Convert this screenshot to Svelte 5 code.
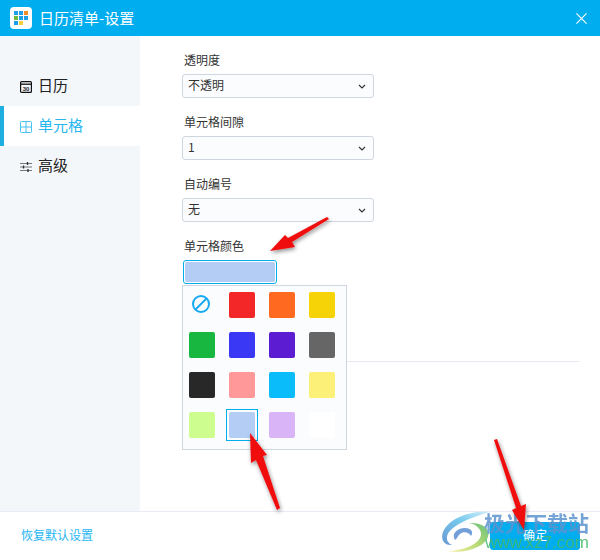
<script>
  const fields = [
    { label: "透明度", value: "不透明" },
    { label: "单元格间隙", value: "1" },
    { label: "自动编号", value: "无" }
  ];

  const colors = [
    "none", "#f32727", "#ff6a20", "#f6d306",
    "#18b73f", "#3a38f5", "#5c1cd2", "#666666",
    "#282828", "#ff9999", "#0bbcfb", "#fcf078",
    "#cdfd8e", "#b3cdf4", "#d9b5f8", "#ffffff"
  ];
  const selected = "#b3cdf4";

  const tiles = [
    "#1f9fe8", "#1f9fe8", "#f28c28",
    "#6cbb3c", "#1f9fe8", "#1f9fe8",
    "#1f9fe8", "#f7cf3c", "transparent"
  ];
</script>

<div class="window">
  <header class="titlebar">
    <div class="logo">
      {#each tiles as t}
        <i style="background:{t}"></i>
      {/each}
    </div>
    <span class="title">日历清单-设置</span>
    <svg class="close" viewBox="0 0 12 12"><path d="M.5.5l11 11M11.5.5l-11 11" stroke="#fff" stroke-width="1.2" fill="none"/></svg>
  </header>

  <div class="body">
    <aside class="side">
      <div class="nav">
        <svg viewBox="0 0 12 12"><rect x=".6" y=".6" width="10.8" height="10.8" rx="1" fill="none" stroke="#111" stroke-width="1.2"/><path d="M1 3.2h10" stroke="#111" stroke-width="1.3"/><text x="6" y="9.6" text-anchor="middle" class="cal">30</text></svg>
        <span>日历</span>
      </div>
      <div class="nav active">
        <svg viewBox="0 0 12 12"><path d="M1.5.5h9a1 1 0 0 1 1 1v9a1 1 0 0 1-1 1h-9a1 1 0 0 1-1-1v-9a1 1 0 0 1 1-1zM6 .5v11M.5 6h11" fill="none" stroke="#45c0f0"/></svg>
        <span>单元格</span>
      </div>
      <div class="nav">
        <svg viewBox="0 0 12 12"><path d="M0 2.5h12M0 6h12M0 9.5h12" stroke="#777"/><path d="M7.5 1v3M3.5 4.5v3M8 8v3" stroke="#333" stroke-width="1.4"/></svg>
        <span>高级</span>
      </div>
    </aside>

    <main class="content">
      {#each fields as f}
        <div class="field">
          <div class="label">{f.label}</div>
          <div class="select">
            <span>{f.value}</span>
            <svg viewBox="0 0 8 5"><path d="M1 1l3 3 3-3" fill="none" stroke="#333" stroke-width="1.2"/></svg>
          </div>
        </div>
      {/each}

      <div class="field color">
        <div class="label">单元格颜色</div>
        <div class="swatch-btn"><div class="fill"></div></div>
        <div class="popover">
          {#each colors as c}
            <div class="cell" class:sel={c === selected}>
              {#if c === "none"}
                <svg class="no" viewBox="0 0 20 20"><circle cx="10" cy="10" r="8" fill="none" stroke="#17a9f2" stroke-width="2"/><path d="M4.5 15.5l11-11" stroke="#17a9f2" stroke-width="2"/></svg>
              {:else}
                <div class="chip" style="background:{c}"></div>
              {/if}
            </div>
          {/each}
        </div>
      </div>

      <div class="divider"></div>
    </main>
  </div>

  <footer class="footer">
    <span class="reset">恢复默认设置</span>
    <button type="button" class="ok"><span>确定</span></button>
  </footer>

  <!-- site watermark -->
  <div class="watermark">
    <svg viewBox="0 0 54 42">
      <defs>
        <linearGradient id="wb" x1="1" y1="0" x2="0" y2="1"><stop offset="0" stop-color="#cfeefa"/><stop offset=".45" stop-color="#5fc0ea"/><stop offset="1" stop-color="#4f86cc"/></linearGradient>
        <linearGradient id="wg" x1="0" y1="1" x2="1" y2="0"><stop offset="0" stop-color="#f6ef9a"/><stop offset=".5" stop-color="#a9d35a"/><stop offset="1" stop-color="#4cb76a"/></linearGradient>
      </defs>
      <path d="M49 2C30 0 8 8 2 22c-3 8 2 14 9 13C4 32 4 24 12 18 22 10 36 6 49 2z" fill="url(#wb)"/>
      <path d="M14 30c-4-6 2-12 10-12 6 0 9 4 6 8-2-4-8-5-11-2-3 3-3 5-5 6z" fill="#5a8fd2"/>
      <path d="M6 41c16 0 34-7 34-17 0-6-6-10-12-11 12-1 22 5 19 14C43 38 22 44 6 41z" fill="url(#wg)"/>
    </svg>
    <div class="wm-text">
      <div class="wm-cn">极光下载站</div>
      <div class="wm-url">www.xz7.com</div>
    </div>
  </div>

  <!-- annotation arrows, drawn over the screenshot -->
  <svg class="arrows" viewBox="0 0 600 560">
    <defs>
      <filter id="sh" x="-30%" y="-30%" width="160%" height="160%"><feDropShadow dx="1" dy="2" stdDeviation="2" flood-color="#000" flood-opacity=".45"/></filter>
    </defs>
    <g fill="#f00c0c" filter="url(#sh)">
      <path d="M327 217l2 2-37 23 3 5-25 4 15-16 3 3z"/>
      <path d="M280 508l-17-52 4-1-17-22 1 30 5-3 21 50z"/>
      <path d="M494 440l3-1 24 67 5-2-2 26-12-20 4-2z"/>
    </g>
  </svg>
</div>

<style>
  :global(body) {
    margin: 0;
    background: #fff;
  }

  .window {
    position: relative;
    width: 600px;
    height: 560px;
    display: flex;
    flex-direction: column;
    overflow: hidden;
    font-family: "Noto Sans CJK SC", "Noto Sans", sans-serif;
    color: #222;
  }

  .titlebar {
    height: 36px;
    flex: none;
    background: #00aeef;
    display: flex;
    align-items: center;
    padding: 0 13px 0 10px;
    color: #fff;
  }

  .logo {
    width: 22px;
    height: 22px;
    box-sizing: border-box;
    padding: 4px;
    background: #fff;
    border-radius: 4px;
    display: grid;
    grid-template-columns: repeat(3, 4px);
    grid-auto-rows: 4px;
    gap: 1px;
  }

  .title {
    margin-left: 7px;
    padding-bottom: 1px;
    font-size: 15px;
    flex: 1;
  }

  .close {
    width: 11px;
    height: 11px;
  }

  .body {
    flex: 1;
    display: flex;
    min-height: 0;
  }

  .side {
    width: 140px;
    flex: none;
    background: #f4f7fa;
    padding-top: 30px;
    box-sizing: border-box;
  }

  .nav {
    height: 40px;
    display: flex;
    align-items: center;
    gap: 6px;
    padding-left: 20px;
    padding-bottom: 3px;
    font-size: 15px;
    box-sizing: border-box;
  }

  .nav svg {
    width: 12px;
    height: 12px;
    margin-top: 5px;
  }

  .cal {
    font-family: "Liberation Sans", sans-serif;
    font-size: 6px;
    font-weight: 700;
    fill: #222;
  }

  .nav.active {
    background: #fff;
    color: #27b6ee;
    border-left: 4px solid #1eaee0;
    padding-left: 16px;
  }

  .content {
    flex: 1;
    padding: 14px 20px 0 42px;
  }

  .field {
    margin-bottom: 14px;
    position: relative;
  }

  .label {
    height: 20px;
    line-height: 20px;
    margin-bottom: 4px;
    margin-left: 2px;
    font-size: 12px;
    color: #333;
  }

  .select {
    width: 192px;
    height: 24px;
    box-sizing: border-box;
    border: 1px solid #cfd6e0;
    border-radius: 3px;
    background: #fbfcfe;
    display: flex;
    align-items: center;
    justify-content: space-between;
    padding: 0 7px 3px 5px;
    font-size: 12px;
    color: #333;
  }

  .select svg {
    width: 8px;
    height: 5px;
    margin-top: 3px;
  }

  .swatch-btn {
    width: 94px;
    height: 24px;
    margin-left: 1px;
    box-sizing: border-box;
    border: 1px solid #00aeef;
    border-radius: 3px;
    padding: 1px;
  }

  .fill {
    height: 100%;
    background: #b3cdf4;
    border-radius: 2px;
  }

  .popover {
    position: absolute;
    left: 0;
    top: 49px;
    z-index: 2;
    width: 165px;
    height: 165px;
    box-sizing: border-box;
    border: 1px solid #cfd6e0;
    background: #fbfcfe;
    padding: 6px;
    display: grid;
    grid-template-columns: repeat(4, 26px);
    grid-auto-rows: 26px;
    gap: 14px;
  }

  .cell {
    position: relative;
    display: flex;
    align-items: center;
    justify-content: center;
  }

  .chip {
    width: 26px;
    height: 26px;
    border-radius: 2px;
  }

  .cell.sel::before {
    content: "";
    position: absolute;
    inset: -3px;
    border: 1px solid #00aeef;
  }

  .no {
    width: 20px;
    height: 20px;
    transform: translate(-1px, -1px);
  }

  .divider {
    height: 1px;
    background: #e8ebf1;
    margin-top: 77px;
    width: 398px;
  }

  .footer {
    height: 49px;
    flex: none;
    box-sizing: border-box;
    border-top: 1px solid #e8ebf3;
    display: flex;
    align-items: center;
    justify-content: space-between;
    padding: 10px 20px 10px 22px;
    background: #fff;
  }

  .reset {
    font-size: 12px;
    color: #1fb6f2;
    margin-bottom: 3px;
    margin-left: -1px;
  }

  .ok {
    width: 90px;
    height: 28px;
    border: 0;
    border-radius: 3px;
    background: #00aeef;
    color: #fff;
    font: inherit;
    font-size: 12px;
    padding: 0 0 3px;
  }

  .arrows {
    position: absolute;
    inset: 0;
    width: 600px;
    height: 560px;
    pointer-events: none;
    z-index: 5;
  }

  .watermark {
    position: absolute;
    left: 441px;
    top: 510px;
    z-index: 4;
    display: flex;
    opacity: 0.85;
  }

  .watermark svg {
    width: 54px;
    height: 42px;
    margin-right: -11px;
  }

  .wm-cn {
    font-family: "Noto Sans CJK SC", sans-serif;
    font-weight: 700;
    font-size: 21px;
    line-height: 24px;
    color: #5c93cf;
  }

  .wm-url {
    font-family: "Liberation Sans", sans-serif;
    font-size: 17px;
    line-height: 18px;
    margin-left: 1px;
    color: #43b96b;
  }
</style>
